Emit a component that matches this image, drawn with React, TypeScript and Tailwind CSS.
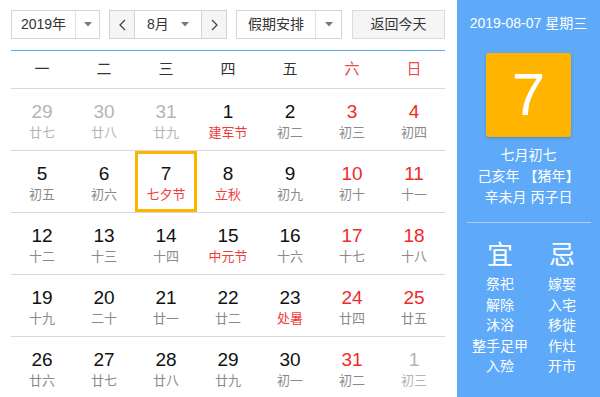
import React from 'react';

type Day = {
	n: number;
	lunar: string;
	muted?: boolean;
	red?: boolean;
	fest?: boolean;
	today?: boolean;
};

const weekdays = ['一', '二', '三', '四', '五', '六', '日'];

const rows: Day[][] = [
	[
		{ n: 29, lunar: '廿七', muted: true },
		{ n: 30, lunar: '廿八', muted: true },
		{ n: 31, lunar: '廿九', muted: true },
		{ n: 1, lunar: '建军节', fest: true },
		{ n: 2, lunar: '初二' },
		{ n: 3, lunar: '初三', red: true },
		{ n: 4, lunar: '初四', red: true }
	],
	[
		{ n: 5, lunar: '初五' },
		{ n: 6, lunar: '初六' },
		{ n: 7, lunar: '七夕节', fest: true, today: true },
		{ n: 8, lunar: '立秋', fest: true },
		{ n: 9, lunar: '初九' },
		{ n: 10, lunar: '初十', red: true },
		{ n: 11, lunar: '十一', red: true }
	],
	[
		{ n: 12, lunar: '十二' },
		{ n: 13, lunar: '十三' },
		{ n: 14, lunar: '十四' },
		{ n: 15, lunar: '中元节', fest: true },
		{ n: 16, lunar: '十六' },
		{ n: 17, lunar: '十七', red: true },
		{ n: 18, lunar: '十八', red: true }
	],
	[
		{ n: 19, lunar: '十九' },
		{ n: 20, lunar: '二十' },
		{ n: 21, lunar: '廿一' },
		{ n: 22, lunar: '廿二' },
		{ n: 23, lunar: '处暑', fest: true },
		{ n: 24, lunar: '廿四', red: true },
		{ n: 25, lunar: '廿五', red: true }
	],
	[
		{ n: 26, lunar: '廿六' },
		{ n: 27, lunar: '廿七' },
		{ n: 28, lunar: '廿八' },
		{ n: 29, lunar: '廿九' },
		{ n: 30, lunar: '初一' },
		{ n: 31, lunar: '初二', red: true },
		{ n: 1, lunar: '初三', muted: true }
	]
];

const yi = ['祭祀', '解除', '沐浴', '整手足甲', '入殓'];
const ji = ['嫁娶', '入宅', '移徙', '作灶', '开市'];

function Caret() {
	return (
		<svg width="8" height="5" viewBox="0 0 8 5" className="fill-[#777]">
			<path d="M0 0h8L4 4.5z" />
		</svg>
	);
}

function Chevron({ dir }: { dir: 'left' | 'right' }) {
	return (
		<svg width="7" height="12" viewBox="0 0 7 12" fill="none" stroke="#444" strokeWidth="1.3">
			{dir === 'left' ? <path d="M6 1L1 6l5 5" /> : <path d="M1 1l5 5-5 5" />}
		</svg>
	);
}

function DayCell({ d }: { d: Day }) {
	const numColor = d.muted ? 'text-[#b5b5b5]' : d.red ? 'text-[#f02a2a]' : 'text-[#111]';
	const lunarColor = d.muted
		? 'text-[#b5b5b5]'
		: d.fest
			? 'text-[#f03c3c]'
			: 'text-[#8a8a8a]';
	return (
		<div className="flex w-[62px] items-stretch justify-center">
			<div
				className={`flex w-[62px] flex-col items-center ${
					d.today ? 'border-[3px] border-[#ffb400] pt-[9px]' : 'pt-[12px]'
				}`}
			>
				<div className={`text-[19px] leading-[22px] ${numColor}`}>{d.n}</div>
				<div className={`mt-[1px] text-[13px] leading-[18px] ${lunarColor}`}>{d.lunar}</div>
			</div>
		</div>
	);
}

export default function App() {
	return (
		<div className="flex h-[397px] w-[600px] overflow-hidden bg-white font-['Liberation_Sans','Noto_Sans_CJK_SC',sans-serif]">
			<div className="w-[457px] pl-[11px]">
				<div className="mt-[10px] flex h-[29px] items-stretch text-[14px] text-[#333]">
					<div className="flex w-[89px] border border-[#d4d4d4]">
						<div className="flex w-[63px] items-center justify-center">2019年</div>
						<div className="flex flex-1 items-center justify-center border-l border-[#e2e2e2]">
							<Caret />
						</div>
					</div>
					<div className="ml-[9px] flex w-[118px] border border-[#d4d4d4]">
						<div className="flex w-[25px] items-center justify-center bg-[#f5f5f5] border-r border-[#d4d4d4]">
							<Chevron dir="left" />
						</div>
						<div className="flex flex-1 items-center justify-between pl-[12px] pr-[12px]">
							<span>8月</span>
							<Caret />
						</div>
						<div className="flex w-[25px] items-center justify-center bg-[#f5f5f5] border-l border-[#d4d4d4]">
							<Chevron dir="right" />
						</div>
					</div>
					<div className="ml-[9px] flex w-[106px] border border-[#d4d4d4]">
						<div className="flex w-[78px] items-center justify-center">假期安排</div>
						<div className="flex flex-1 items-center justify-center border-l border-[#e2e2e2]">
							<Caret />
						</div>
					</div>
					<div className="ml-[10px] flex w-[93px] items-center justify-center border border-[#dcdcdc] bg-[#f5f5f5]">
						返回今天
					</div>
				</div>
				<div className="mt-[11px] w-[434px] border-t border-[#5aa8f8]">
					<div className="flex h-[38px] items-center border-b border-[#d9d9d9]">
						{weekdays.map((w, i) => (
							<div
								key={w}
								className={`w-[62px] text-center text-[15px] ${i >= 5 ? 'text-[#e84a4a]' : 'text-[#333]'}`}
							>
								{w}
							</div>
						))}
					</div>
					{rows.map((r, ri) => (
						<div key={ri} className="flex h-[62px] border-b border-[#d9d9d9]">
							{r.map((d, di) => (
								<DayCell key={di} d={d} />
							))}
						</div>
					))}
				</div>
			</div>
			<div className="flex w-[143px] flex-col items-center bg-[#5eaaf8] text-white">
				<div className="mt-[14px] text-[14px] leading-[18px]">2019-08-07 星期三</div>
				<div className="mt-[21px] flex h-[84px] w-[85px] items-center justify-center rounded-[3px] bg-[#ffb400] shadow-[0_1px_3px_rgba(0,0,0,0.2)]">
					<span className="text-[60px] font-light leading-none">7</span>
				</div>
				<div className="mt-[8px] flex flex-col items-center text-[14px] leading-[21px]">
					<div>七月初七</div>
					<div>己亥年 【猪年】</div>
					<div>辛未月 丙子日</div>
				</div>
				<div className="mt-[14px] h-px w-[124px] bg-[#a9d0fb]" />
				<div className="mt-[14px] flex w-full pl-[11px]">
					<div className="flex w-[64px] flex-col items-center">
						<div className="text-[26px] leading-[36px]">宜</div>
						<div className="mt-[1px] flex flex-col items-center text-[14px] leading-[20.5px]">
							{yi.map((t) => (
								<div key={t}>{t}</div>
							))}
						</div>
					</div>
					<div className="ml-[12px] flex w-[36px] flex-col items-center">
						<div className="text-[26px] leading-[36px]">忌</div>
						<div className="mt-[1px] flex flex-col items-center text-[14px] leading-[20.5px]">
							{ji.map((t) => (
								<div key={t}>{t}</div>
							))}
						</div>
					</div>
				</div>
			</div>
		</div>
	);
}
